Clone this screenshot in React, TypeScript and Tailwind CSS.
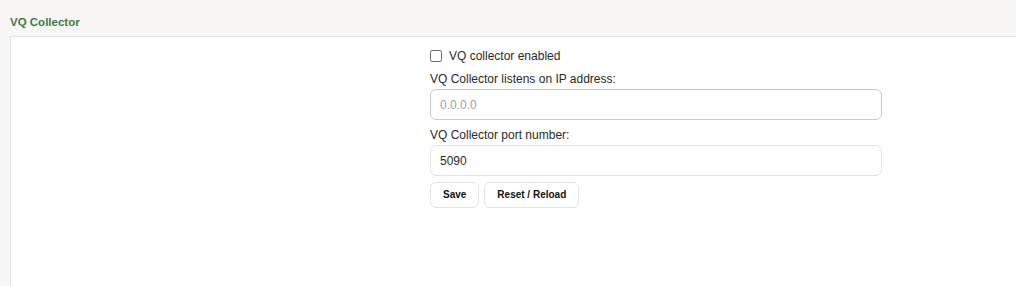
import { useState } from 'react';

// ── Component ─────────────────────────────────────────────────────

export default function App() {
  const [enabled, setEnabled] = useState(false);
  const [ip, setIp] = useState('');
  const [port, setPort] = useState('5090');

  return (
    <div className="min-h-[286px] bg-white font-['Liberation_Sans',Arial,sans-serif] text-[#2a2a2a]">
      <div className="flex h-[286px] w-[1016px] flex-col bg-[#f8f7f5]">
        {/* Section title */}
        <h2 className="pl-[10px] pt-[15px] text-[11.5px] leading-[14px] font-bold text-[#3f7b45]">
          VQ Collector
        </h2>

        {/* Panel */}
        <div className="ml-[10px] mt-[7px] flex flex-1 border-l border-t border-[#e4e3e1] bg-white pt-[11px]">
          <div className="w-[419px] shrink-0" />

          <div className="flex w-[452px] flex-col text-[12px] leading-[16px]">
            <label className="flex h-[16px] items-center gap-[7px]">
              <input
                type="checkbox"
                checked={enabled}
                onChange={(e) => setEnabled(e.target.checked)}
                className="h-[12px] w-[12px] appearance-none rounded-[2px] border border-[#707070] bg-white checked:bg-[#3f7b45]"
              />
              <span>VQ collector enabled</span>
            </label>

            <label className="mt-[7px] block">VQ Collector listens on IP address:</label>
            <input
              type="text"
              value={ip}
              placeholder="0.0.0.0"
              onChange={(e) => setIp(e.target.value)}
              className="mt-[2px] h-[31px] w-full rounded-[6px] border border-[#cbcbcb] bg-white px-[9px] text-[12px] outline-none placeholder:text-[#a3a3a3]"
            />

            <label className="mt-[7px] block">VQ Collector port number:</label>
            <input
              type="text"
              value={port}
              onChange={(e) => setPort(e.target.value)}
              className="mt-[2px] h-[31px] w-full rounded-[6px] border border-[#e3e3e3] bg-white px-[9px] text-[12px] outline-none"
            />

            <div className="mt-[6px] flex gap-[5px]">
              <button className="h-[26px] rounded-[6px] border border-[#e3e3e3] bg-white px-[12px] text-[10px] font-bold text-[#111]">
                Save
              </button>
              <button className="h-[26px] rounded-[6px] border border-[#e3e3e3] bg-white px-[12px] text-[10px] font-bold text-[#111]">
                Reset / Reload
              </button>
            </div>
          </div>
        </div>
      </div>
    </div>
  );
}
